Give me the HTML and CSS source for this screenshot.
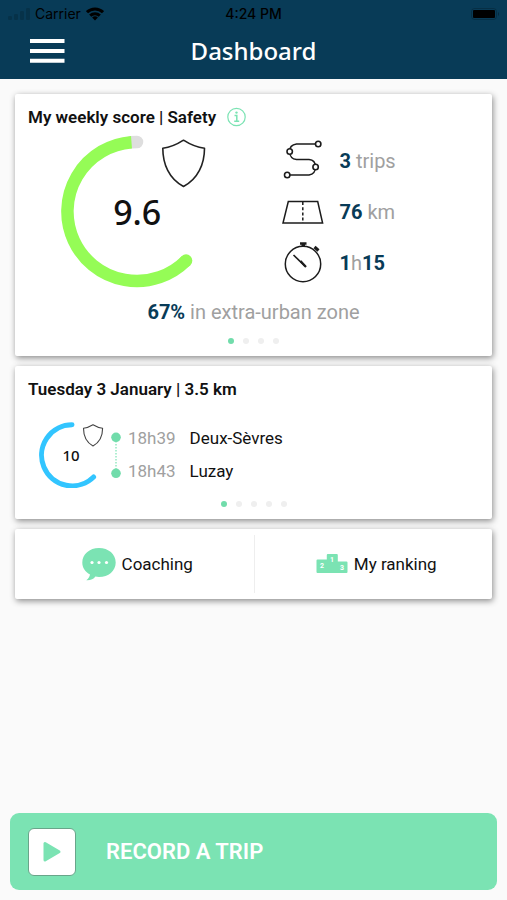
FILE: index.html
```html
<!DOCTYPE html>
<html lang="en">
	<head>
		<meta charset="UTF-8">
		<meta name="viewport" content="width=device-width, initial-scale=1.0">
		<title>Dashboard</title>
		<link rel="stylesheet" href="styles.css">
	</head>
	<body>
		<header class="top">
			<div class="status">
				<div class="status-left">
					<svg class="signal" width="22" height="12" viewBox="0 0 22 12">
						<rect x="0" y="8" width="4" height="4" rx="1"/>
						<rect x="6" y="6" width="4" height="6" rx="1"/>
						<rect x="12" y="3" width="4" height="9" rx="1"/>
						<rect x="18" y="0" width="4" height="12" rx="1"/>
					</svg>
					<span>Carrier</span>
					<svg width="18" height="14" viewBox="0 0 18 14" fill="none" stroke="#000" stroke-width="3">
						<path d="M1 5.200a11.400 11.400 0 0 1 16 0"/>
						<path d="M4.200 8.600a6.900 6.900 0 0 1 9.600 0"/>
						<path d="M9 13.600l-2.900-3.100a4.300 4.300 0 0 1 5.800 0z" fill="#000" stroke="none"/>
					</svg>
				</div>
				<span class="status-time">4:24 PM</span>
				<svg class="battery" width="28" height="12" viewBox="0 0 28 12">
					<rect x="0.500" y="0.500" width="25" height="11" rx="3" fill="none" stroke="#000" stroke-opacity=".2"/>
					<rect x="2" y="2" width="22" height="8" rx="1"/>
					<path d="M27 4v4q1-.6 1-2t-1-2z" opacity=".3"/>
				</svg>
			</div>
			<div class="nav">
				<button class="menu-btn" type="button" aria-label="Menu">
					<svg width="36" height="24" viewBox="0 0 36 24" stroke="#fff" stroke-width="4">
						<path d="M0 2h34.500M0 12h34.500M0 21.700h34.500"/>
					</svg>
				</button>
				<h1>Dashboard</h1>
			</div>
		</header>

		<main class="cards">
			<section class="card">
				<h2>My weekly score | Safety
					<button class="info-btn" type="button" aria-label="About the score">
						<svg width="20" height="20" viewBox="0 0 20 20" fill="none" stroke="#7be3b3">
							<circle cx="10.500" cy="10" r="8.700" stroke-width="1.200"/>
							<path d="M8.500 8.500h2.300v5.500M8.200 14.300h5" stroke-width="1.500"/>
							<circle cx="10.500" cy="5.600" r="1.200" fill="#7be3b3" stroke="none"/>
						</svg>
					</button>
				</h2>
				<div class="summary">
					<div class="gauge">
						<svg width="152" height="153" viewBox="0 0 152 153" fill="none">
							<path d="M76 7A69.500 69.500 0 0 0 69.900 7.300" stroke="#dedede" stroke-width="12.500" stroke-linecap="round"/>
							<path d="M125.100 125.600A69.500 69.500 0 0 1 124.100 126.600" stroke="#95fc56" stroke-width="12.500" stroke-linecap="round"/>
							<path d="M70.500 7.200A69.500 69.500 0 1 0 125.100 125.600" stroke="#95fc56" stroke-width="12.500"/>
							<path d="M122.500 5.200Q133 12 143.500 13.300C143.500 29 137 44 122.500 51.500C108 44 101.800 29 101.800 13.300Q112 12 122.500 5.200Z" stroke="#222" stroke-width="1.600" stroke-linejoin="round"/>
						</svg>
						<span class="score">9.6</span>
					</div>
					<ul class="metrics">
						<li>
							<svg width="42" height="42" viewBox="0 0 42 42" fill="none" stroke="#1c1c1c" stroke-width="1.400">
								<path d="M34 4H14.500Q7.500 5 7.500 11.500Q8 19 14.500 19.500H27Q33.500 20 33.500 27Q33.500 34 27 35H8"/>
								<g fill="#fff" stroke-width="1.600">
									<circle cx="36.200" cy="4" r="2.700"/>
									<circle cx="7.700" cy="11.500" r="2.700"/>
									<circle cx="33.600" cy="27" r="2.700"/>
									<circle cx="5.200" cy="35" r="2.700"/>
								</g>
							</svg>
							<span><b>3</b> trips</span>
						</li>
						<li>
							<svg width="42" height="42" viewBox="0 0 42 42" fill="none" stroke="#1c1c1c" stroke-width="1.500">
								<path d="M6.300 10.500H35.700L40.600 32H1Z"/>
								<path d="M20.800 11v21" stroke-dasharray="3 2.200"/>
							</svg>
							<span><b>76</b> km</span>
						</li>
						<li>
							<svg width="42" height="42" viewBox="0 0 42 42" fill="none" stroke="#1c1c1c" stroke-width="1.500">
								<circle cx="21" cy="22" r="17.700"/>
								<path d="M18 1.500h6.500M19.500 3.300h3.500" stroke-width="2.600"/>
								<path d="M32.500 5l4 3.500" stroke-width="3"/>
								<path d="M11.500 13l11.500 11.200" stroke-width="1.700"/>
								<path d="M18.500 19l5.500 6" stroke-width="2.200"/>
							</svg>
							<span><b>1</b>h<b>15</b></span>
						</li>
					</ul>
				</div>
				<p class="zone"><b>67%</b> in extra-urban zone</p>
				<div class="dots"><i class="on"></i><i></i><i></i><i></i></div>
			</section>

			<section class="card">
				<h2>Tuesday 3 January | 3.5 km</h2>
				<div class="trip">
					<div class="gauge gauge-small">
						<svg width="66" height="66" viewBox="0 0 66 66" fill="none">
							<path d="M34 2.800A30.500 30.500 0 1 0 55.600 54.900" stroke="#32c5ff" stroke-width="5" stroke-linecap="round"/>
							<path d="M55 2.800Q60 5.800 64.600 6.300C64.600 14 61.500 20.500 55 24C48.500 20.500 45.500 14 45.500 6.300Q50 5.800 55 2.800Z" stroke="#444" stroke-width="1.100" stroke-linejoin="round"/>
						</svg>
						<span class="score">10</span>
					</div>
					<svg width="12" height="66" viewBox="0 0 12 66">
						<path d="M6 16v35" stroke="#7be3b3" stroke-width="1.200" stroke-dasharray="1.500 1.500"/>
						<circle cx="6" cy="15.300" r="4.800" fill="#71dcab"/>
						<circle cx="6" cy="51.300" r="4.800" fill="#71dcab"/>
					</svg>
					<ol class="stops">
						<li><time>18h39</time><span>Deux-Sèvres</span></li>
						<li><time>18h43</time><span>Luzay</span></li>
					</ol>
				</div>
				<div class="dots"><i class="on"></i><i></i><i></i><i></i><i></i></div>
			</section>

			<nav class="card links">
				<a href="#coaching">
					<svg width="34" height="34" viewBox="0 0 34 34" fill="#7be3b3">
						<path d="M17 1C7.500 1 .3 7.300 .3 15.400C.3 20.500 3.300 25 8 27.500C7.700 29.800 6.500 31.500 4.300 33.300C8.500 33.500 11.500 32.500 13.400 29.600Q15 30 17 30C26.500 30 33.700 23.600 33.700 15.400S26.500 1 17 1Z"/>
						<g fill="#fff"><circle cx="10" cy="15.500" r="1.600"/><circle cx="17" cy="15.500" r="1.600"/><circle cx="24.500" cy="15.500" r="1.600"/></g>
					</svg>
					Coaching
				</a>
				<a href="#ranking">
					<svg width="32" height="34" viewBox="0 0 32 34">
						<path d="M1.500 12.500H10.800V8Q10.800 7 11.800 7H20.800Q21.800 7 21.800 8V14.500H30.500Q31.500 14.500 31.500 15.500V25Q31.500 26 30.500 26H1.500Q.5 26 .5 25V13.500Q.5 12.500 1.500 12.500Z" fill="#7be3b3"/>
						<g class="podium-num"><text x="6" y="21">2</text><text x="16" y="15">1</text><text x="26" y="23">3</text></g>
					</svg>
					My ranking
				</a>
			</nav>
		</main>

		<footer class="bottom">
			<button class="record-btn" type="button">
				<span class="play">
					<svg width="20" height="22" viewBox="0 0 20 22">
						<path d="M3 2.500V19L17 10.800Z" fill="#7be3b3" stroke="#7be3b3" stroke-width="3" stroke-linejoin="round"/>
					</svg>
				</span>
				RECORD A TRIP
			</button>
		</footer>
	</body>
</html>
```
FILE: styles.css
```css
* { box-sizing: border-box; }
body {
	display: flex;
	flex-direction: column;
	min-height: 100vh;
	margin: 0;
	background-color: #fafafa;
	color: #111;
	font: 17px/22px Roboto, sans-serif;
}
h1, h2, p, ul, ol { margin: 0; padding: 0; }
ul, ol { list-style: none; }
svg { display: block; flex: none; }
button {
	border: 0;
	padding: 0;
	background: none;
	font: inherit;
	color: inherit;
	cursor: pointer;
}

/* header */
.top {
	height: 79px;
	background-color: #083b57;
}
.status, .nav {
	display: grid;
	grid-template-columns: 1fr auto 1fr;
	align-items: center;
}
.status {
	height: 28px;
	padding: 0 8px;
	color: #000;
	font: 14px/16px Inter, sans-serif;
}
.status-left {
	display: flex;
	align-items: center;
	gap: 5px;
}
.signal { opacity: .15; }
.status-time { font-weight: 500; }
.battery { justify-self: end; }
.nav {
	height: 46px;
	padding: 0 30px;
}
.nav h1 {
	color: white;
	font: 500 24px/32px "Noto Sans", sans-serif;
}

/* cards */
.cards {
	display: flex;
	flex-direction: column;
	gap: 10px;
	padding: 15px;
}
.card {
	padding: 12px 13px;
	border-radius: 2px;
	background-color: white;
	box-shadow: 1px 2px 6px rgba(0, 0, 0, .45);
}
.card h2 {
	display: flex;
	align-items: center;
	gap: 10px;
	font-size: 17px;
	font-weight: 600;
	line-height: 22px;
}
.summary {
	display: grid;
	grid-template-columns: 1fr 1fr;
	margin-top: 7px;
}
.gauge {
	display: grid;
	justify-self: center;
	align-items: center;
	justify-items: center;
}
.gauge > * { grid-area: 1 / 1; }
.summary .gauge { margin-right: 7px; }
.score {
	font: 500 34px/40px "Noto Sans", sans-serif;
}
.gauge-small .score {
	font-size: 15px;
	line-height: 20px;
}
.metrics {
	display: grid;
	grid-template-rows: repeat(3, 51px);
	align-items: center;
	padding-left: 28px;
}
.metrics li {
	display: flex;
	align-items: center;
	gap: 16px;
}
.metrics, .zone {
	color: #a0a0a0;
	font-size: 20px;
}
.metrics b, .zone b { color: #083b57; }
.zone {
	margin-top: 11px;
	line-height: 26px;
	text-align: center;
}
.dots {
	display: flex;
	justify-content: center;
	gap: 9px;
	margin-top: 13px;
}
.dots i {
	width: 6px;
	height: 6px;
	border-radius: 50%;
	background-color: #efefef;
}
.dots .on { background-color: #71dcab; }

.trip {
	display: flex;
	gap: 6px;
	margin-top: 22px;
	padding-left: 10px;
}
.stops {
	font-size: 17px;
	line-height: 33px;
}
.stops li {
	display: flex;
	gap: 14px;
}
.stops time { color: #a0a0a0; }

.links {
	display: grid;
	grid-template-columns: 1fr 1fr;
	padding: 6px 0;
}
.links a {
	display: flex;
	align-items: center;
	justify-content: center;
	gap: 6px;
	height: 58px;
	padding-left: 6px;
	color: inherit;
	text-decoration: none;
}
.links a + a { border-left: 1px solid #eee; }
.podium-num {
	fill: white;
	font: bold 7px Roboto, sans-serif;
	text-anchor: middle;
}

/* record button */
.bottom {
	margin-top: auto;
	padding: 10px;
}
.record-btn {
	display: flex;
	align-items: center;
	gap: 30px;
	width: 100%;
	height: 77px;
	padding: 0 18px;
	border-radius: 9px;
	background-color: #7be3b3;
	color: white;
	font-size: 22px;
	font-weight: 600;
}
.play {
	display: grid;
	place-items: center;
	width: 48px;
	height: 48px;
	border: 1px solid #69a58a;
	border-radius: 6px;
	background-color: white;
}
```
